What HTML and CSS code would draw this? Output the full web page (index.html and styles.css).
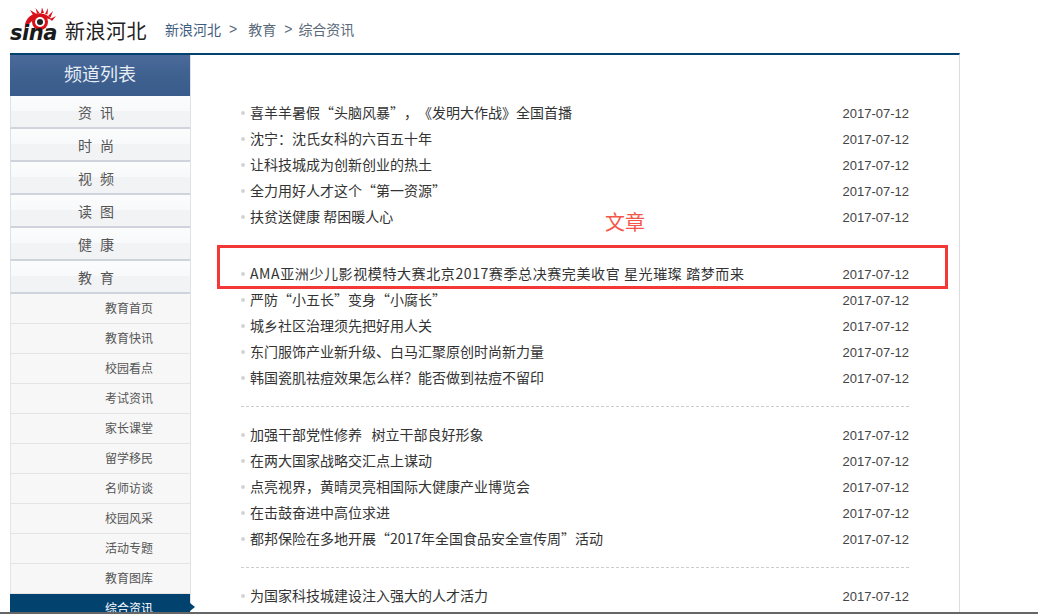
FILE: index.html
```html
<!DOCTYPE html>
<html lang="zh">
<head>
<meta charset="utf-8">
<title>综合资讯</title>
<link rel="stylesheet" href="styles.css">
</head>
<body>
<div class="page">
  <header class="top">
    <div class="logo">
      <svg class="eye" width="36" height="26" viewBox="0 0 36 26">
        <g fill="#d8101a">
          <path d="M4 22C3 15 7 9 13 7c7-2 14 0 18 6-3-1-5-2-8-2-6-1-10 1-13 4-2 2-4 4-6 7z"/>
          <path d="M12 8 9 3l6 3.500zM16 6.500 14.500 1l4 5zM20 6l1-5.500L23 6zM24 7l3-6-.5 6.500zM27 9l5-5-2.500 6.500zM29 12l6-3-4 5z"/>
        </g>
        <circle cx="19" cy="15" r="8" fill="#d8101a"/>
        <circle cx="19" cy="15" r="5" fill="#fff"/>
        <circle cx="19" cy="15" r="3" fill="#222"/>
      </svg>
      <span class="sina">sina</span>
      <span class="brand">新浪河北</span>
    </div>
    <nav class="crumbs"><span class="crumb-link">新浪河北</span><span class="sep">&gt;</span><span class="c2">教育</span><span class="sep">&gt;</span><span class="c3">综合资讯</span></nav>
  </header>
  <main class="frame">
    <aside class="side">
      <h2 class="side-title">频道列表</h2>
      <ul class="menu">
        <li class="menu-item">资 讯</li>
        <li class="menu-item">时 尚</li>
        <li class="menu-item">视 频</li>
        <li class="menu-item">读 图</li>
        <li class="menu-item">健 康</li>
        <li class="menu-item">教 育</li>
      </ul>
      <ul class="sub">
        <li class="sub-item">教育首页</li>
        <li class="sub-item">教育快讯</li>
        <li class="sub-item">校园看点</li>
        <li class="sub-item">考试资讯</li>
        <li class="sub-item">家长课堂</li>
        <li class="sub-item">留学移民</li>
        <li class="sub-item">名师访谈</li>
        <li class="sub-item">校园风采</li>
        <li class="sub-item">活动专题</li>
        <li class="sub-item">教育图库</li>
        <li class="sub-item active">综合资讯</li>
      </ul>
    </aside>
    <section class="content">
      <ul class="group first">
        <li class="row"><span class="t">喜羊羊暑假“头脑风暴”，《发明大作战》全国首播</span><span class="d">2017-07-12</span></li>
        <li class="row"><span class="t">沈宁：沈氏女科的六百五十年</span><span class="d">2017-07-12</span></li>
        <li class="row"><span class="t">让科技城成为创新创业的热土</span><span class="d">2017-07-12</span></li>
        <li class="row"><span class="t">全力用好人才这个“第一资源”</span><span class="d">2017-07-12</span></li>
        <li class="row"><span class="t">扶贫送健康 帮困暖人心</span><span class="d">2017-07-12</span></li>
      </ul>
      <ul class="group dashed">
        <li class="row"><span class="t wide">AMA亚洲少儿影视模特大赛北京2017赛季总决赛完美收官 星光璀璨 踏梦而来</span><span class="d">2017-07-12</span></li>
        <li class="row"><span class="t">严防“小五长”变身“小腐长”</span><span class="d">2017-07-12</span></li>
        <li class="row"><span class="t">城乡社区治理须先把好用人关</span><span class="d">2017-07-12</span></li>
        <li class="row"><span class="t">东门服饰产业新升级、白马汇聚原创时尚新力量</span><span class="d">2017-07-12</span></li>
        <li class="row"><span class="t">韩国瓷肌祛痘效果怎么样？能否做到祛痘不留印</span><span class="d">2017-07-12</span></li>
      </ul>
      <ul class="group dashed">
        <li class="row"><span class="t">加强干部党性修养&nbsp;&nbsp; 树立干部良好形象</span><span class="d">2017-07-12</span></li>
        <li class="row"><span class="t">在两大国家战略交汇点上谋动</span><span class="d">2017-07-12</span></li>
        <li class="row"><span class="t">点亮视界，黄晴灵亮相国际大健康产业博览会</span><span class="d">2017-07-12</span></li>
        <li class="row"><span class="t">在击鼓奋进中高位求进</span><span class="d">2017-07-12</span></li>
        <li class="row"><span class="t">都邦保险在多地开展“2017年全国食品安全宣传周”活动</span><span class="d">2017-07-12</span></li>
      </ul>
      <ul class="group">
        <li class="row"><span class="t">为国家科技城建设注入强大的人才活力</span><span class="d">2017-07-12</span></li>
      </ul>
    </section>
  </main>
  <div class="note">文章</div>
  <div class="mark"></div>
  <div class="edge"></div>
</div>
</body>
</html>
```
FILE: styles.css
```css
* { box-sizing: border-box; }
html, body { margin: 0; padding: 0; height: 614px; overflow: hidden; background: #fff; }
body { font-family: "Noto Sans CJK SC", "Liberation Sans", sans-serif; font-size: 14px; color: #333; text-spacing-trim: space-all; }
ul { list-style: none; margin: 0; padding: 0; }
.page { position: relative; width: 1038px; height: 614px; overflow: hidden; padding-left: 10px; }
.top { display: flex; align-items: flex-end; height: 53px; width: 950px; }
.logo { position: relative; display: flex; align-items: flex-end; width: 155px; height: 45px; padding-bottom: 8px; }
.eye { position: absolute; left: 11px; top: -1px; }
.sina { position: relative; width: 55px; font: italic bold 21px/24px "DejaVu Sans", sans-serif; letter-spacing: -.5px; color: #1a1a1a; }
.brand { position: relative; top: -2px; font: 20px/24px "Noto Sans CJK SC", sans-serif; letter-spacing: .5px; color: #222; }
.crumbs { display: flex; height: 22px; margin-bottom: 13px; line-height: 22px; color: #5a6a7a; }
.crumb-link { color: #3f5d7f; }
.sep { margin-left: 8px; font-family: "Liberation Sans", sans-serif; }
.c2 { margin-left: 11px; }
.c3 { margin-left: 6px; }
.frame { display: flex; width: 950px; height: 561px; border-top: 2px solid #02426f; border-right: 1px solid #ddd; }
.side { flex: none; width: 181px; border-right: 1px solid #dfe2e6; }
.side-title { margin: 0; height: 41px; font-size: 18px; font-weight: normal; line-height: 37px; text-align: center; color: #e8edf4; background: linear-gradient(#4a6a9a 0, #3f6190 50%, #3a5c8c 100%); }
.menu-item { height: 33px; padding-top: 4px; padding-right: 8px; border-left: 1px solid #dfe2e6; border-bottom: 2px solid #cfd4dc; font-size: 14px; line-height: 24px; letter-spacing: 1px; word-spacing: 3px; text-align: center; color: #555; background: linear-gradient(#fbfcfc 0, #f8f9fa 50%, #f2f3f5 50%, #f2f3f5 100%); }
.sub-item { height: 30px; padding-left: 94px; border-left: 1px solid #e4e4e4; border-bottom: 1px solid #e4e4e4; font-size: 12px; line-height: 28px; color: #555; background: #f7f7f7; }
.sub-item.active { position: relative; border: 0; padding-left: 95px; color: #fff; background: #02426f; }
.sub-item.active::after { content: ""; position: absolute; left: 100%; top: 9px; border-left: 5px solid #02426f; border-top: 4px solid transparent; border-bottom: 4px solid transparent; }
.content { flex: 1; padding: 45px 50px 0; }
.group { padding-bottom: 15px; margin-bottom: 15px; }
.first { padding-bottom: 16px; }
.dashed { border-bottom: 1px dashed #ccc; }
.row { display: flex; justify-content: space-between; height: 26px; padding-left: 9px; line-height: 26px; position: relative; color: #333; }
.row::before { content: ""; position: absolute; left: 0; top: 11px; width: 4px; height: 4px; border-radius: 50%; background: #d4d4d4; }
.t { font-size: 14px; line-height: 24px; }
.wide { letter-spacing: .6px; }
.d { font-family: "Liberation Sans", sans-serif; font-size: 13px; line-height: 28px; color: #444; }
.note { position: absolute; left: 605px; top: 208px; font-size: 20px; line-height: 28px; color: #f5564a; }
.mark { position: absolute; left: 217px; top: 245px; width: 731px; height: 44px; border: 3px solid #f43838; }
.edge { position: absolute; left: 0; right: 0; bottom: 0; height: 2px; background: #666; }
```
